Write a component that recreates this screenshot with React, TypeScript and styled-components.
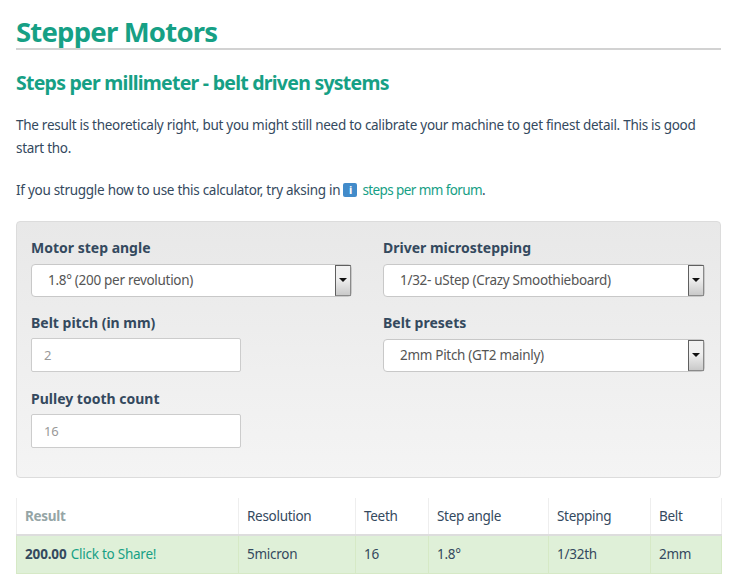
import React from "react";
import styled, { createGlobalStyle } from "styled-components";

const Global = createGlobalStyle`
  html, body { margin: 0; padding: 0; background: #fff; }
  body { font-family: "Noto Sans", sans-serif; color: #34495e; font-size: 14px; }
  * { box-sizing: border-box; }
`;

const Page = styled.main`
  width: 742px;
  height: 586px;
  overflow: hidden;
  padding: 14px 21px 0 16px;
`;
const Title = styled.h1`
  margin: 0;
  height: 36px;
  font: 700 27.5px/36px "Noto Sans", sans-serif;
  letter-spacing: -0.8px;
  color: #16a085;
  border-bottom: 2px solid #d2d2d2;
`;
const Subtitle = styled.h2`
  margin: 20px 0 0;
  font: 700 19.5px/26px "Noto Sans", sans-serif;
  letter-spacing: -0.75px;
  color: #16a085;
`;
const Para = styled.p<{ $top: number }>`
  margin: ${(p) => p.$top}px 0 0;
  font: 400 13.5px/23px "Noto Sans", sans-serif;
  letter-spacing: -0.28px;
  color: #34495e;
`;
const Link = styled.a`
  color: #16a085;
  text-decoration: none;
`;
const ForumLink = styled(Link)`
  letter-spacing: -0.6px;
`;
const InfoBadge = styled.span`
  display: inline-flex;
  align-items: center;
  justify-content: center;
  width: 14px;
  height: 14px;
  margin: 0 5px 0 0;
  border-radius: 2px;
  background: #428bca;
  color: #fff;
  font: 700 11px/14px "Noto Sans", sans-serif;
  vertical-align: 1px;
`;
const Panel = styled.section`
  margin-top: 19px;
  height: 257px;
  padding: 16px 15px 0 14px;
  border: 1px solid #dcdcdc;
  border-radius: 4px;
  background: linear-gradient(#e8e8e8, #f4f4f4);
  display: grid;
  grid-template-columns: 321px 322px;
  grid-template-rows: 75px 76px auto;
  column-gap: 31px;
  align-content: start;
`;
const Field = styled.div`
  display: flex;
  flex-direction: column;
`;
const Label = styled.label<{ $tight?: boolean }>`
  font: 700 14px/20px "Noto Sans", sans-serif;
  color: #34495e;
  margin-bottom: ${(p) => (p.$tight ? 5 : 6)}px;
`;
const Select = styled.div`
  height: 33px;
  display: flex;
  align-items: stretch;
  justify-content: space-between;
  background: #fff;
  border: 1px solid #c8c8c8;
  border-radius: 4px;
`;
const SelectText = styled.span`
  padding-left: 16px;
  font: 400 13.5px/31px "Noto Sans", sans-serif;
  letter-spacing: -0.3px;
  color: #555;
`;
const Arrow = styled.span`
  width: 16px;
  display: flex;
  justify-content: center;
  padding-top: 12px;
  background: linear-gradient(#f2f2f2, #efefef 45%, #c9c9c9);
  border: 1px solid #5f5f5f;
  border-right-color: #8a8a8a;
  border-bottom-color: #8a8a8a;
  &::after {
    content: "";
    width: 0;
    height: 0;
    border-left: 4px solid transparent;
    border-right: 4px solid transparent;
    border-top: 4px solid #111;
  }
`;
const Input = styled.input`
  width: 210px;
  height: 34px;
  padding: 0 12px;
  background: #fff;
  border: 1px solid #ccc;
  border-radius: 2px;
  font: 400 13px "Noto Sans", sans-serif;
  letter-spacing: -0.3px;
  color: #555;
  &::placeholder { color: #999; opacity: 1; }
`;
const Table = styled.table`
  margin-top: 20px;
  width: 705px;
  table-layout: fixed;
  border-collapse: collapse;
`;
const Head = styled.th<{ $muted?: boolean }>`
  height: 37px;
  padding: 0 8px;
  text-align: left;
  font: ${(p) => (p.$muted ? 700 : 400)} 13.5px/20px "Noto Sans", sans-serif;
  letter-spacing: -0.3px;
  color: ${(p) => (p.$muted ? "#95a5a6" : "#34495e")};
  border-left: 1px solid #eee;
  border-right: 1px solid #eee;
  border-bottom: 2px solid #ddd;
`;
const Cell = styled.td`
  height: 38px;
  padding: 0 8px;
  background: #dff0d8;
  font: 400 13.5px/20px "Noto Sans", sans-serif;
  letter-spacing: -0.25px;
  color: #34495e;
  border: 1px solid #d6e9c6;
  border-top: 0;
`;
const Strong = styled.strong`
  font-weight: 700;
  letter-spacing: -0.15px;
  margin-right: 1px;
`;

const widths = [222, 117, 73, 120, 102, 71];
const heads = ["Resolution", "Teeth", "Step angle", "Stepping", "Belt"];
const vals = ["5micron", "16", "1.8°", "1/32th", "2mm"];

function Dropdown({ label, value }: { label: string; value: string }) {
  return (
    <Field>
      <Label>{label}</Label>
      <Select>
        <SelectText>{value}</SelectText>
        <Arrow />
      </Select>
    </Field>
  );
}
function TextField({ label, value }: { label: string; value: string }) {
  return (
    <Field>
      <Label $tight>{label}</Label>
      <Input placeholder={value} readOnly />
    </Field>
  );
}

export default function App() {
  return (
    <Page>
      <Global />
      <Title>Stepper Motors</Title>
      <Subtitle>Steps per millimeter - belt driven systems</Subtitle>
      <Para $top={18}>
        The result is theoreticaly right, but you might still need to calibrate your machine to get finest detail. This is good start tho.
      </Para>
      <Para $top={19}>
        If you struggle how to use this calculator, try aksing in <InfoBadge>i</InfoBadge>
        <ForumLink>steps per mm forum</ForumLink>.
      </Para>
      <Panel>
        <Dropdown label="Motor step angle" value="1.8° (200 per revolution)" />
        <Dropdown label="Driver microstepping" value="1/32- uStep (Crazy Smoothieboard)" />
        <TextField label="Belt pitch (in mm)" value="2" />
        <Dropdown label="Belt presets" value="2mm Pitch (GT2 mainly)" />
        <TextField label="Pulley tooth count" value="16" />
      </Panel>
      <Table>
        <colgroup>
          {widths.map((w, i) => (
            <col key={i} width={w} />
          ))}
        </colgroup>
        <thead>
          <tr>
            <Head $muted>Result</Head>
            {heads.map((h) => (
              <Head key={h}>{h}</Head>
            ))}
          </tr>
        </thead>
        <tbody>
          <tr>
            <Cell>
              <Strong>200.00</Strong> <Link>Click to Share!</Link>
            </Cell>
            {vals.map((v) => (
              <Cell key={v}>{v}</Cell>
            ))}
          </tr>
        </tbody>
      </Table>
    </Page>
  );
}
